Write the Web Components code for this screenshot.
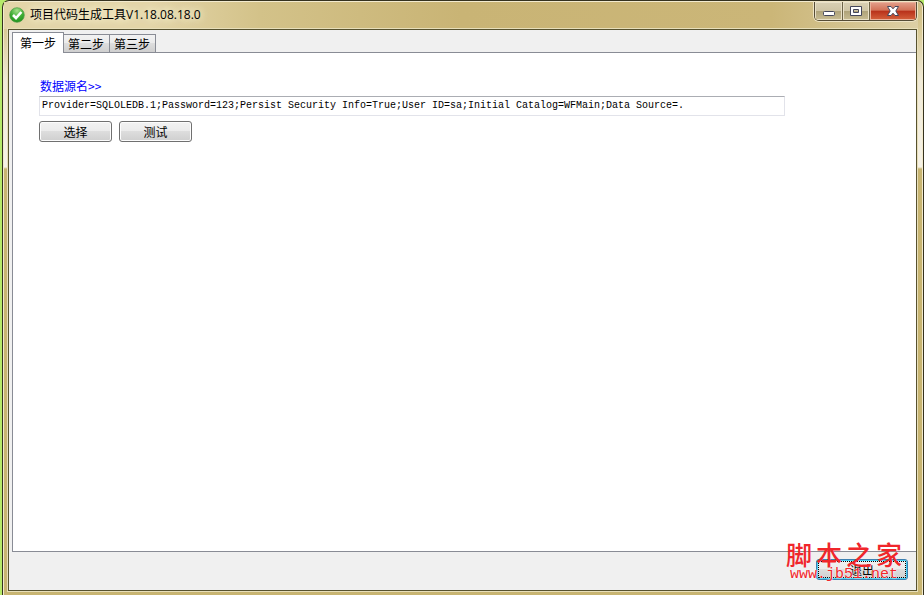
<!DOCTYPE html>
<html lang="zh-CN">
<head>
<meta charset="utf-8">
<title>项目代码生成工具V1.18.08.18.0</title>
<style>
  html, body {
    height: 100%;
    margin: 0;
  }
  body {
    background: #b6ea6a;
    font-family: "Liberation Sans", "Noto Sans CJK SC", sans-serif;
    font-size: 12px;
    color: #000;
  }
</style>
</head>
<body>
<app-window caption="项目代码生成工具V1.18.08.18.0">
  <tab-pages labels="第一步,第二步,第三步">
    <data-source></data-source>
  </tab-pages>
  <app-footer slot="footer"></app-footer>
</app-window>

<script>
function attach(el, html) {
  const template = document.createElement('template');
  template.innerHTML = html;
  el.attachShadow({ mode: 'open' });
  el.shadowRoot.appendChild(template.content.cloneNode(true));
}

class AppWindow extends HTMLElement {
  constructor() {
    super();
    attach(this, `
      <style>
        :host {
          display: block;
          height: 100%;
          box-sizing: border-box;
          padding-left: 2px;
        }
        .frame {
          height: 100%;
          box-sizing: border-box;
          display: flex;
          flex-direction: column;
          padding: 0 6px 4px 5px;
          border: 1px solid #35321f;
          border-bottom: 0;
          border-radius: 7px 7px 0 0;
          box-shadow: inset 1px 1px 0 #f3ebcf, inset -1px 0 0 #f3ebcf;
          background: linear-gradient(#cdbb80 0, #d8c994 28px, #f0ead8 80px, #f6f2e6 166px, #c8b572 168px, #c8b572 100%);
        }
        header {
          display: flex;
          flex: none;
          height: 27px;
          margin: 1px -1px 0 -4px;
          padding: 0 1px 0 5px;
          background: linear-gradient(90deg, #e3d5a8 0, #e3d5a8 16%, #d3c289 28%, #c9b475 50%, #cbb678 84%, #dccfa5 100%);
        }
        .icon {
          width: 16px;
          height: 16px;
          margin: 5px 5px 0 0;
        }
        h1 {
          margin: 0;
          font: 12px/25px "Open Sans", "Noto Sans CJK SC", sans-serif;
          text-shadow: 0 0 8px #fff6d8, 0 0 8px #fff6d8;
          flex: 1;
        }
        .client {
          flex: 1;
          display: flex;
          flex-direction: column;
          min-height: 0;
          border: 1px solid #57522f;
          outline: 1px solid #e8dfba;
          background: #f0f0f0;
        }
      </style>
      <div class="frame">
        <header>
          <svg class="icon" viewBox="0 0 16 16">
            <defs>
              <radialGradient id="ball" cx=".5" cy=".2" r=".9">
                <stop offset="0" stop-color="#a5e08c"/>
                <stop offset=".5" stop-color="#3fae35"/>
                <stop offset="1" stop-color="#168b16"/>
              </radialGradient>
            </defs>
            <circle cx="8" cy="8" r="7.3" fill="url(#ball)" stroke="#4b9b42" stroke-width=".7"/>
            <path d="M4 8l3 3 5.400-6" fill="none" stroke="#fff" stroke-width="2.600"/>
          </svg>
          <h1></h1>
          <window-controls></window-controls>
        </header>
        <div class="client">
          <slot></slot>
          <slot name="footer"></slot>
        </div>
      </div>
    `);
    this.shadowRoot.querySelector('h1').textContent = this.getAttribute('caption');
  }
}

class WindowControls extends HTMLElement {
  constructor() {
    super();
    attach(this, `
      <style>
        :host {
          display: block;
        }
        .group {
          display: flex;
          height: 18px;
          border: 1px solid #554c36;
          border-top: 0;
          border-radius: 0 0 5px 5px;
          overflow: hidden;
          box-shadow: 0 0 0 1px #eee4c5;
        }
        button {
          display: flex;
          align-items: center;
          justify-content: center;
          width: 28px;
          padding: 0;
          border: 0;
          border-right: 1px solid #6d6448;
          box-shadow: inset 0 0 0 1px #e9e1c8;
          background: linear-gradient(#d9d0b4 0, #cfc5a5 48%, #aea279 50%, #c9bd93 100%);
        }
        button:nth-child(2) {
          width: 27px;
        }
        svg {
          flex: none;
        }
        .close {
          width: 46px;
          border-right: 0;
          box-shadow: inset 0 0 0 1px #eab09a;
          background: linear-gradient(#e3a08c 0, #d27257 46%, #b8301a 50%, #d5623c 100%);
        }
      </style>
      <div class="group">
        <button aria-label="最小化">
          <svg width="14" height="14"><rect x="1.5" y="7.5" width="11" height="4" rx="1" fill="#fff" stroke="#44465a"/></svg>
        </button>
        <button aria-label="最大化">
          <svg width="14" height="14"><path d="M1.5 2.5h11v9h-11zM4.5 5.500v3h5v-3z" fill="#fff" fill-rule="evenodd" stroke="#44465a"/></svg>
        </button>
        <button class="close" aria-label="关闭">
          <svg width="14" height="14"><path d="M1.500 2.500h3.500l2 2.300 2-2.300h3.500L9.800 7l2.700 4.500H9L7 9.200l-2 2.300H1.500L4.200 7z" fill="#fff" stroke="#44465a"/></svg>
        </button>
      </div>
    `);
  }
}

class TabPages extends HTMLElement {
  constructor() {
    super();
    attach(this, `
      <style>
        :host {
          flex: 1;
          display: flex;
          flex-direction: column;
          min-height: 0;
          padding: 2px 0 0 3px;
        }
        .tabs {
          display: flex;
          align-items: flex-end;
          height: 20px;
        }
        button {
          height: 18px;
          padding: 0 5px 0 4px;
          border: 1px solid #898c95;
          border-left: 0;
          border-bottom: 0;
          background: linear-gradient(#f2f2f2 0, #ebebeb 48%, #dddddd 50%, #cfcfcf 100%);
          font: 12px/16px "Noto Sans CJK SC", sans-serif;
          color: #000;
          white-space: nowrap;
        }
        button[aria-selected=true] {
          position: relative;
          height: 21px;
          padding: 0 7px;
          margin-bottom: -1px;
          border-left: 1px solid #898c95;
          background: #fff;
        }
        .page {
          flex: 1;
          border: 1px solid #898c95;
          border-right: 0;
          background: #fff;
        }
      </style>
      <div class="tabs" role="tablist"></div>
      <div class="page" role="tabpanel"><slot></slot></div>
    `);
    const tabs = this.shadowRoot.querySelector('.tabs');
    this.getAttribute('labels').split(',').forEach((label, i) => {
      const tab = document.createElement('button');
      tab.setAttribute('role', 'tab');
      tab.setAttribute('aria-selected', i === 0);
      tab.textContent = label;
      tab.addEventListener('click', () => this.select(tab));
      tabs.appendChild(tab);
    });
  }

  select(tab) {
    this.shadowRoot.querySelectorAll('[role=tab]').forEach(t => {
      t.setAttribute('aria-selected', t === tab);
    });
  }
}

class DataSource extends HTMLElement {
  constructor() {
    super();
    attach(this, `
      <style>
        :host {
          display: block;
          padding: 24px 26px;
        }
        label {
          display: block;
          padding-left: 1px;
          color: #00f;
          font: 12px/18px "Noto Sans CJK SC", sans-serif;
        }
        input {
          display: block;
          width: 100%;
          max-width: 746px;
          height: 20px;
          box-sizing: border-box;
          margin-top: 1px;
          padding: 0 2px 2px;
          border: 1px solid #e2e3ea;
          border-top-color: #abadb3;
          font: 10px "Liberation Mono", monospace;
          color: #000;
        }
        .actions {
          display: flex;
          gap: 7px;
          margin-top: 5px;
        }
      </style>
      <label for="conn">数据源名&gt;&gt;</label>
      <input id="conn" type="text" spellcheck="false" value="Provider=SQLOLEDB.1;Password=123;Persist Security Info=True;User ID=sa;Initial Catalog=WFMain;Data Source=.">
      <div class="actions">
        <push-button>选择</push-button>
        <push-button>测试</push-button>
      </div>
    `);
  }
}

class PushButton extends HTMLElement {
  constructor() {
    super();
    attach(this, `
      <style>
        :host {
          display: block;
          width: 73px;
          height: 21px;
        }
        button {
          width: 100%;
          height: 100%;
          padding: 0;
          border: 1px solid #707070;
          border-radius: 3px;
          box-shadow: inset 0 0 0 1px #fcfcfc;
          background: linear-gradient(#f2f2f2 0, #ebebeb 48%, #dddddd 50%, #cfcfcf 100%);
          font: 12px/18px "Noto Sans CJK SC", sans-serif;
          color: #000;
        }
        :host([default]) {
          width: 92px;
        }
        :host([default]) button {
          border-color: #3c7fb1;
          box-shadow: inset 0 0 0 1px #48d1f5;
          outline: 1px dotted #000;
          outline-offset: -3px;
        }
      </style>
      <button><slot></slot></button>
    `);
  }
}

class AppFooter extends HTMLElement {
  constructor() {
    super();
    attach(this, `
      <style>
        :host {
          display: flex;
          justify-content: flex-end;
          position: relative;
          height: 31px;
          padding: 7px 8px 0 0;
        }
        site-mark {
          position: absolute;
          right: 14px;
          bottom: 8px;
        }
      </style>
      <push-button default>退出</push-button>
      <site-mark></site-mark>
    `);
  }
}

class SiteMark extends HTMLElement {
  constructor() {
    super();
    attach(this, `
      <style>
        :host {
          display: block;
          width: 116px;
          color: #f0262b;
          white-space: nowrap;
          pointer-events: none;
        }
        .name {
          display: flex;
          justify-content: space-between;
          font: 500 26px/28px "Noto Sans CJK SC", sans-serif;
        }
        .url {
          padding-left: 4px;
          font: 15px/14px "Liberation Mono", monospace;
          text-shadow: 0 0 1px #fff, 0 0 2px #fff;
        }
      </style>
      <div class="name"><span>脚</span><span>本</span><span>之</span><span>家</span></div>
      <div class="url">www.jb51.net</div>
    `);
  }
}

window.customElements.define('push-button', PushButton);
window.customElements.define('site-mark', SiteMark);
window.customElements.define('window-controls', WindowControls);
window.customElements.define('data-source', DataSource);
window.customElements.define('tab-pages', TabPages);
window.customElements.define('app-footer', AppFooter);
window.customElements.define('app-window', AppWindow);
</script>
</body>
</html>
